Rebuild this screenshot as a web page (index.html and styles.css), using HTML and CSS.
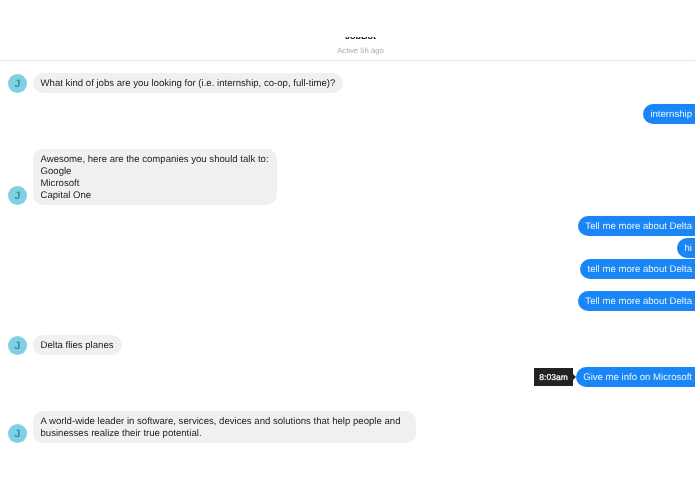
FILE: index.html
```html
<!DOCTYPE html>
<html lang="en">
<head>
    <meta charset="UTF-8">
    <title>JobBot</title>
    <link rel="stylesheet" href="styles.css">
</head>
<body>
    <header class="topbar">
        <div class="name"><span>JobBot</span></div>
        <div class="status">Active 5h ago</div>
    </header>
    <main class="thread">
        <div class="row bot first">
            <div class="avatar">J</div>
            <div class="bubble">What kind of jobs are you looking for (i.e. internship, co-op, full-time)?</div>
        </div>
        <div class="row me gap-11">
            <div class="bubble">internship</div>
        </div>
        <div class="row bot gap-25">
            <div class="avatar">J</div>
            <div class="bubble">Awesome, here are the companies you should talk to:<br>Google<br>Microsoft<br>Capital One</div>
        </div>
        <div class="row me gap-11">
            <div class="bubble">Tell me more about Delta</div>
        </div>
        <div class="row me gap-2">
            <div class="bubble">hi</div>
        </div>
        <div class="row me gap-1">
            <div class="bubble">tell me more about Delta</div>
        </div>
        <div class="row me gap-12">
            <div class="bubble">Tell me more about Delta</div>
        </div>
        <div class="row bot gap-24">
            <div class="avatar">J</div>
            <div class="bubble">Delta flies planes</div>
        </div>
        <div class="row me gap-12">
            <div class="time">8:03am</div>
            <div class="bubble">Give me info on Microsoft</div>
        </div>
        <div class="row bot gap-24">
            <div class="avatar">J</div>
            <div class="bubble wrapped">A world-wide leader in software, services, devices and solutions that help people and<br>businesses realize their true potential.</div>
        </div>
    </main>
</body>
</html>
```

FILE: styles.css
```css
body {
    margin: 0;
    background: #fff;
    color: #1c1c1c;
    font-family: "Liberation Sans", Arial, sans-serif;
    font-size: 9.6px;
    line-height: 12px;
    text-rendering: geometricPrecision;
    overflow: hidden;
    filter: blur(0.3px);
}

.topbar {
    height: 23px;
    padding: 37px 0 0 26px;
    border-bottom: 1px solid #e6e6e6;
    text-align: center;
}

.name {
    height: 4px;
    overflow: hidden;
    display: flex;
    flex-direction: column;
    justify-content: flex-end;
    font-size: 9px;
    font-weight: bold;
    line-height: 10px;
}

.status {
    margin-top: 5px;
    font-size: 7.7px;
    line-height: 10px;
    color: #a9a9a9;
}

.thread {
    display: flex;
    flex-direction: column;
}

.row {
    display: flex;
    align-items: flex-end;
}

.row.first {
    margin-top: 12px;
}

.row.bot {
    padding-left: 8px;
}

.row.me {
    justify-content: flex-end;
    align-items: center;
}

.gap-1 { margin-top: 1px; }
.gap-2 { margin-top: 2px; }
.gap-11 { margin-top: 11px; }
.gap-12 { margin-top: 12px; }
.gap-24 { margin-top: 24px; }
.gap-25 { margin-top: 25px; }

.avatar {
    width: 19px;
    height: 19px;
    margin: 0 6px 0.5px 0;
    border-radius: 50%;
    background: #7fd0e2;
    color: #3f86a3;
    font-size: 10.5px;
    font-weight: bold;
    line-height: 20px;
    text-align: center;
}

.bubble {
    padding: 5px 8px 3px 7.5px;
    border-radius: 10px;
    background: #f0f0f0;
    white-space: nowrap;
}

.bubble.wrapped {
    padding-right: 16px;
}

.me .bubble {
    padding: 5px 3px 3px 7.5px;
    border-radius: 10px 0 0 10px;
    background: #1a86f5;
    color: #e8f2ff;
}

.time {
    position: relative;
    margin-right: 3px;
    padding: 3px 5px;
    background: #222;
    color: #fff;
    font-size: 8.5px;
    -webkit-text-stroke: 0.2px #fff;
}

.time::after {
    content: "";
    position: absolute;
    top: 6px;
    right: -3px;
    border-left: 3px solid #222;
    border-top: 3px solid transparent;
    border-bottom: 3px solid transparent;
}
```
